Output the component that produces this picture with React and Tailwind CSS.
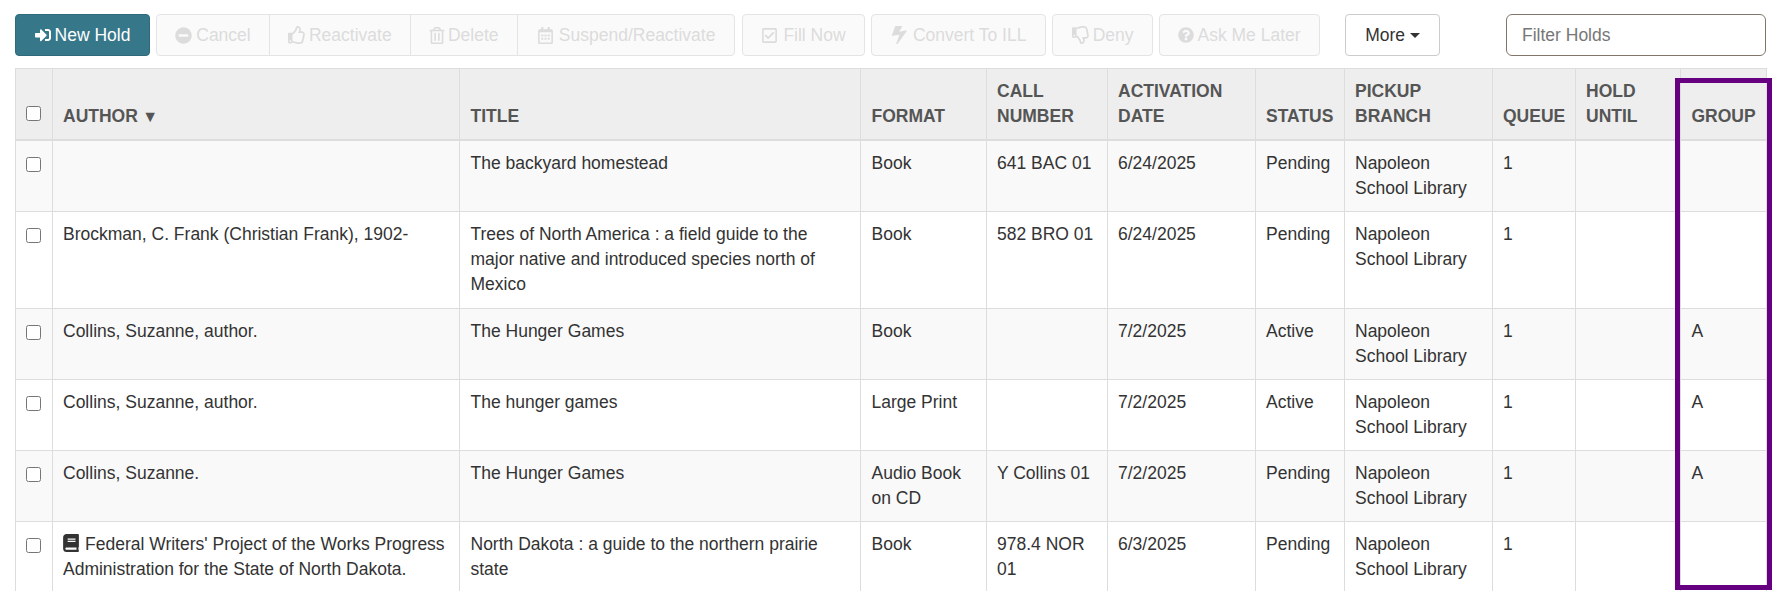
import React from "react";
import {
  FaSignInAlt, FaMinusCircle, FaRegThumbsUp, FaRegTrashAlt, FaRegCalendarAlt,
  FaRegCheckSquare, FaRegThumbsDown, FaQuestionCircle, FaBook,
} from "react-icons/fa";

const FaBoltOld = ({ className }) => (
  <svg viewBox="400 130 960 1660" preserveAspectRatio="none" className={className} fill="currentColor">
    <path d="M1333 566q18 20 7 44l-540 1157q-13 25-42 25-4 0-14-2-17-5-25.5-19t-4.5-30l197-808-406 101q-4 1-12 1-18 0-31-11-18-15-13-39l201-825q4-14 16-23t28-9h328q19 0 32 12.5t13 29.5q0 8-5 18l-171 463 396-98q8-2 12-2 19 0 34 15z" />
  </svg>
);

const disabled = "inline-flex items-center justify-center h-[42px] border border-[#e4e4e4] bg-[#fafafa] text-[#dcdcdc] text-[17.5px] leading-[25px]";

const Btn = ({ Icon, label, cls = "", icon = "w-[17px] h-[17px]" }) => (
  <div className={`${disabled} ${cls}`}>
    <Icon className={`${icon} shrink-0`} />
    <span>{label}</span>
  </div>
);

const headers = [
  ["AUTHOR"], ["TITLE"], ["FORMAT"], ["CALL", "NUMBER"], ["ACTIVATION", "DATE"], ["STATUS"],
  ["PICKUP", "BRANCH"], ["QUEUE"], ["HOLD", "UNTIL"], ["GROUP"],
];

const rows = [
  ["", "The backyard homestead", "Book", "641 BAC 01", "6/24/2025", "Pending", "1", ""],
  ["Brockman, C. Frank (Christian Frank), 1902-", "Trees of North America : a field guide to the major native and introduced species north of Mexico", "Book", "582 BRO 01", "6/24/2025", "Pending", "1", ""],
  ["Collins, Suzanne, author.", "The Hunger Games", "Book", "", "7/2/2025", "Active", "1", "A"],
  ["Collins, Suzanne, author.", "The hunger games", "Large Print", "", "7/2/2025", "Active", "1", "A"],
  ["Collins, Suzanne.", "The Hunger Games", "Audio Book on CD", "Y Collins 01", "7/2/2025", "Pending", "1", "A"],
  ["BOOK", "North Dakota : a guide to the northern prairie state", "Book", "978.4 NOR 01", "6/3/2025", "Pending", "1", ""],
];

const td = "border border-[#dddddd] pl-[10px] pr-[10px] pt-[10px] pb-[10.25px] align-top";
const tdShift = "border border-[#dddddd] pl-[10.5px] pr-[9px] pt-[10px] pb-[10.25px] align-top";
const thBase = "border border-[#dddddd] border-b-[2px] pr-[9px] pt-[10px] pb-[10px] align-bottom text-left font-bold text-[17.5px] leading-[25px] text-[#555555]";

export default function App() {
  return (
    <div className="relative w-[1783px] h-[591px] overflow-hidden bg-white font-['Liberation_Sans',Arial,sans-serif] text-[17.5px] leading-[25px] text-[#333333]">
      <div className="flex items-center pl-[15px] pr-[17px] pt-[14px] h-[68px] pb-[12px]">
        <div className="inline-flex items-center justify-center gap-[4px] w-[135px] h-[42px] rounded-[4px] bg-[#36788a] border border-[#2f6a7a] text-white">
          <FaSignInAlt className="w-[16px] h-[16px]" />
          <span>New Hold</span>
        </div>
        <div className="flex ml-[6px]">
          <Btn Icon={FaMinusCircle} label="Cancel" cls="w-[114px] gap-[4px] rounded-l-[4px]" />
          <Btn Icon={FaRegThumbsUp} label="Reactivate" cls="w-[141.6px] gap-[3px] -ml-px" icon="w-[18px] h-[18px]" />
          <Btn Icon={FaRegTrashAlt} label="Delete" cls="w-[108.4px] gap-[3px] -ml-px" icon="w-[16px] h-[17px]" />
          <Btn Icon={FaRegCalendarAlt} label="Suspend/Reactivate" cls="w-[218.3px] gap-[5px] -ml-px rounded-r-[4px]" />
        </div>
        <Btn Icon={FaRegCheckSquare} label="Fill Now" cls="w-[122.5px] gap-[5px] ml-[7px] rounded-[4px]" />
        <Btn Icon={FaBoltOld} label="Convert To ILL" cls="w-[174.7px] gap-[6px] ml-[6.5px] rounded-[4px]" icon="w-[16px] h-[18px]" />
        <Btn Icon={FaRegThumbsDown} label="Deny" cls="w-[100.4px] gap-[3px] ml-[6.5px] rounded-[4px]" icon="w-[18px] h-[18px]" />
        <Btn Icon={FaQuestionCircle} label="Ask Me Later" cls="w-[160.3px] gap-[3px] ml-[6.5px] rounded-[4px]" icon="w-[16px] h-[16px]" />
        <div className="ml-[25.5px] inline-flex items-center justify-center gap-[5px] w-[95px] h-[42px] rounded-[4px] border border-[#cccccc] bg-white">
          <span>More</span>
          <span className="w-0 h-0 border-x-[5px] border-x-transparent border-t-[5px] border-t-[#333333]" />
        </div>
        <input
          placeholder="Filter Holds"
          className="ml-auto w-[260px] h-[42px] px-[15px] rounded-[6px] border border-[#82766b] bg-white text-[17.5px] placeholder:text-[#777777] outline-none"
        />
      </div>

      <div className="pl-[15px]">
        <table className="table-fixed w-[1751px] border-collapse">
          <colgroup>
            <col className="w-[37px]" />
            <col className="w-[407px]" />
            <col className="w-[401px]" />
            <col className="w-[126px]" />
            <col className="w-[121px]" />
            <col className="w-[148px]" />
            <col className="w-[89px]" />
            <col className="w-[148px]" />
            <col className="w-[83px]" />
            <col className="w-[105px]" />
            <col className="w-[86px]" />
          </colgroup>
          <thead>
            <tr className="bg-[#eeeeee]">
              <th className="border border-[#dddddd] border-b-[2px] align-bottom px-[10px] pb-[18px]">
                <input type="checkbox" className="block w-[15px] h-[15px]" />
              </th>
              {headers.map((h, i) => (
                <th key={i} className={`${thBase} ${i === 1 || i === 2 || i === 9 ? "pl-[10.5px]" : "pl-[10px]"}`}>
                  {h.map((l) => (
                    <div key={l}>
                      {l}
                      {i === 0 && <span className="text-[16px]"> ▼</span>}
                    </div>
                  ))}
                </th>
              ))}
            </tr>
          </thead>
          <tbody>
            {rows.map((r, i) => (
              <tr key={i} className={i % 2 === 0 ? "bg-[#f9f9f9]" : "bg-white"}>
                <td className={td}>
                  <input type="checkbox" className="block mt-[6px] w-[15px] h-[15px]" />
                </td>
                <td className={td}>
                  {r[0] === "BOOK" ? (
                    <>
                      <FaBook className="inline-block w-[16px] h-[18px] align-[-2px] mr-[6px] text-[#333333]" />
                      Federal Writers' Project of the Works Progress Administration for the State of North Dakota.
                    </>
                  ) : r[0]}
                </td>
                <td className={tdShift}>{r[1]}</td>
                <td className={tdShift}>{r[2]}</td>
                <td className={td}>{r[3]}</td>
                <td className={td}>{r[4]}</td>
                <td className={td}>{r[5]}</td>
                <td className={td}>Napoleon School Library</td>
                <td className={td}>{r[6]}</td>
                <td className={td}></td>
                <td className={tdShift}>{r[7]}</td>
              </tr>
            ))}
          </tbody>
        </table>
      </div>

      <div className="absolute left-[1675px] top-[78px] w-[97px] h-[512px] border-[5px] border-[#660080] pointer-events-none" />
    </div>
  );
}
